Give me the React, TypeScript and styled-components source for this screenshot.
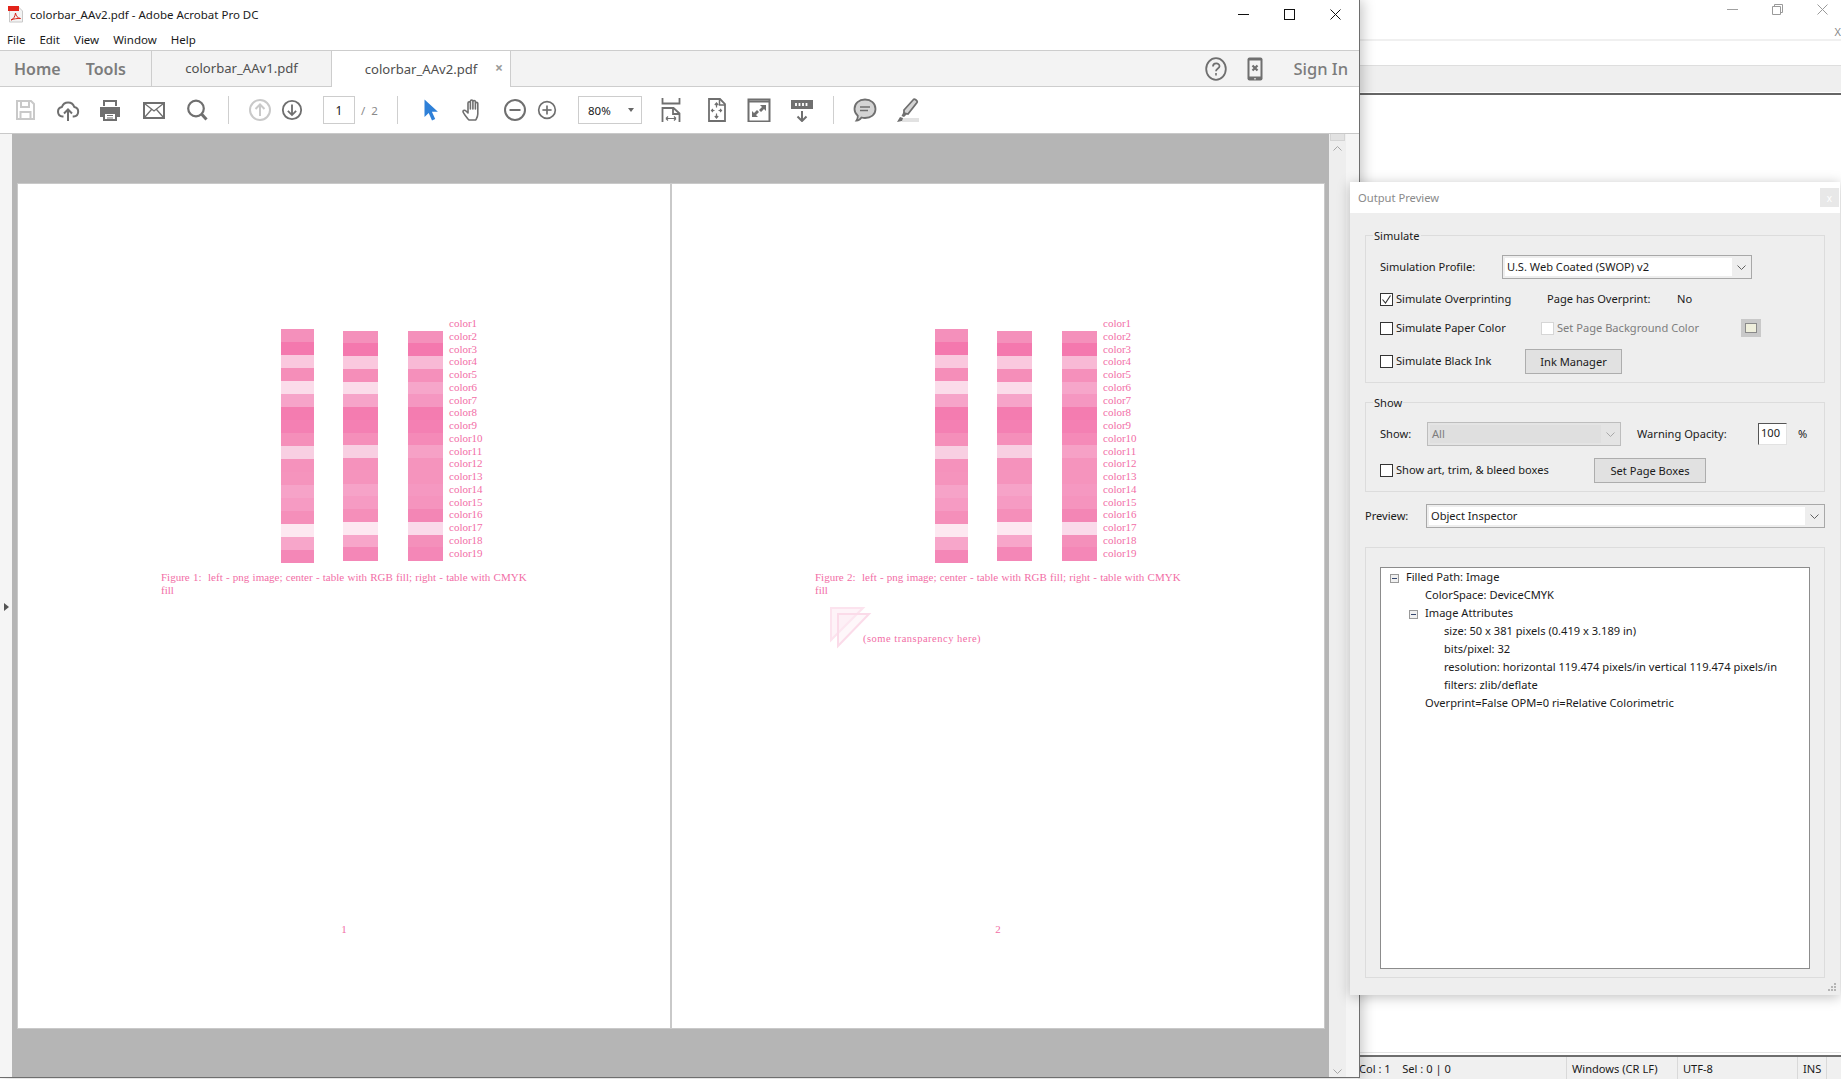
import React from 'react';
import styled, { createGlobalStyle } from 'styled-components';

const GlobalStyle = createGlobalStyle`
  html, body {
    margin: 0;
    padding: 0;
    width: 100%;
    height: 100%;
    overflow: hidden;
    background: #fff;
  }
  * {
    box-sizing: border-box;
  }
`;

const UI_FONT = `'Noto Sans', 'Open Sans', sans-serif`;
const PDF_FONT = `'Liberation Serif', 'Times New Roman', serif`;
const ICON = '#6f6f6f';

const Desktop = styled.div`
  position: relative;
  width: 1841px;
  height: 1079px;
  overflow: hidden;
  font-family: ${UI_FONT};
  font-size: 11.1px;
  color: #1a1a1a;
`;

/* ---- window behind ---- */
const BackWindow = styled.div`
  position: absolute;
  left: 1358px;
  top: 0;
  width: 483px;
  height: 1079px;
  background: #fff;
  display: flex;
  flex-direction: column;
`;

const BackTop = styled.div`
  height: 41px;
  position: relative;
  border-bottom: 2px solid #f0f0f0;
`;

const BackControls = styled.div`
  position: absolute;
  top: 4px;
  right: 13px;
  display: flex;
  gap: 34px;
`;

const BackClose = styled.span`
  position: absolute;
  right: 0;
  top: 24px;
  font-size: 11px;
  color: #8a8a8a;
`;

const BackBlank = styled.div`
  height: 25px;
  border-bottom: 1px solid #dedede;
`;

const BackBand = styled.div`
  height: 26px;
  background: #efefef;
`;

const BackRule = styled.div`
  height: 3px;
  background: #fff;
  border-bottom: 2px solid #666;
`;

const BackBody = styled.div`
  flex: 1;
  border-bottom: 1px solid #e4e4e4;
`;

const StatusBar = styled.div`
  height: 24px;
  margin-top: 2px;
  border-top: 2px solid #6e6e6e;
  background: #f0f0f0;
  display: flex;
  align-items: center;
`;

const StatusCell = styled.div<{ $w: number }>`
  width: ${({ $w }) => $w}px;
  height: 100%;
  padding-left: ${({ $w }) => ($w > 200 ? 1 : 5)}px;
  border-right: 1px solid #d9d9d9;
  display: flex;
  align-items: center;
  white-space: pre;
`;

/* ---- acrobat window ---- */
const AcrobatWindow = styled.div`
  position: absolute;
  left: 0;
  top: 0;
  width: 1360px;
  height: 1078px;
  background: #fff;
  border-right: 1px solid #6e6e6e;
  border-bottom: 1px solid #6e6e6e;
  box-shadow: 3px 0 12px rgba(0, 0, 0, 0.22);
  display: flex;
  flex-direction: column;
`;

const TitleBar = styled.div`
  height: 29px;
  display: flex;
  align-items: center;
  padding-left: 8px;
  font-size: 11.5px;
`;

const TitleText = styled.span`
  margin-left: 6px;
`;

const WindowControls = styled.div`
  margin-left: auto;
  display: flex;
  align-items: center;
  padding-right: 1px;
`;

const WindowButton = styled.div`
  width: 46px;
  height: 29px;
  display: flex;
  align-items: center;
  justify-content: center;
`;

const MenuBar = styled.div`
  height: 21px;
  display: flex;
  align-items: center;
  padding-left: 7px;
  gap: 14px;
  font-size: 11.5px;
`;

const TabBar = styled.div`
  height: 37px;
  display: flex;
  background: #f3f3f3;
  border-top: 1px solid #cdcdcd;
  border-bottom: 1px solid #cdcdcd;
`;

const NavArea = styled.div`
  width: 152px;
  display: flex;
  align-items: center;
  padding-left: 14px;
  gap: 25px;
  border-right: 1px solid #cdcdcd;
`;

const NavLink = styled.span`
  font-size: 16px;
  font-weight: 600;
  color: #7c7c7c;
`;

const Tab = styled.div<{ $active?: boolean; $w: number }>`
  position: relative;
  width: ${({ $w }) => $w}px;
  height: ${({ $active }) => ($active ? 36 : 35)}px;
  display: flex;
  align-items: center;
  justify-content: center;
  font-size: 13.1px;
  color: #4f4f4f;
  background: ${({ $active }) => ($active ? '#fff' : 'transparent')};
  border-right: 1px solid #cdcdcd;
  padding-bottom: 1px;
`;

const TabClose = styled.span`
  position: absolute;
  right: 7px;
  top: 7px;
  font-size: 14px;
  font-weight: 700;
  color: #9a9a9a;
`;

const TabRight = styled.div`
  margin-left: auto;
  display: flex;
  align-items: center;
  padding-right: 11px;
`;

const SignIn = styled.span`
  margin-left: 30px;
  font-size: 16.5px;
  font-weight: 500;
  color: #7c7c7c;
`;

const Toolbar = styled.div`
  height: 46px;
  display: flex;
  align-items: center;
  padding-left: 4px;
  background: #fff;
`;

const ToolSlot = styled.div<{ $w: number }>`
  width: ${({ $w }) => $w}px;
  flex: none;
  height: 100%;
  display: flex;
  align-items: center;
  justify-content: center;
`;

const ToolSep = styled.div`
  width: 1px;
  height: 28px;
  background: #cfcfcf;
`;

const PageBox = styled.div`
  margin-left: 20px;
  width: 32px;
  height: 28px;
  border: 1px solid #cdcdcd;
  display: flex;
  align-items: center;
  justify-content: center;
  font-size: 12px;
`;

const PageCount = styled.div`
  width: 31px;
  padding-left: 6px;
  font-size: 11.5px;
  color: #8a8a8a;
  white-space: pre;
`;

const ZoomBox = styled.div`
  margin-left: 21px;
  width: 64px;
  height: 28px;
  border: 1px solid #cdcdcd;
  display: flex;
  align-items: center;
  justify-content: space-between;
  padding: 0 7px 0 9px;
  font-size: 11.5px;
`;

const Caret = styled.span`
  width: 0;
  height: 0;
  border-left: 3.5px solid transparent;
  border-right: 3.5px solid transparent;
  border-top: 4px solid #666;
`;

const Workspace = styled.div`
  flex: 1;
  display: flex;
  min-height: 0;
  border-top: 1px solid #c9c9c9;
`;

const SidePanel = styled.div`
  width: 12px;
  background: #f5f5f5;
  display: flex;
  align-items: center;
  justify-content: center;
  padding-top: 2px;
`;

const SideArrow = styled.span`
  width: 0;
  height: 0;
  border-top: 4px solid transparent;
  border-bottom: 4px solid transparent;
  border-left: 5px solid #555;
`;

const DocArea = styled.div`
  width: 1317px;
  background: #b5b5b5;
  padding: 50px 0 0 6px;
  display: flex;
  align-items: flex-start;
  gap: 2px;
`;

const PdfPage = styled.div`
  position: relative;
  width: 652px;
  height: 844px;
  background: #fff;
  box-shadow: 0 0 0 1px #c9c9c9;
  padding: 133px 0 0 263px;
  display: flex;
  flex-direction: column;
  font-family: ${PDF_FONT};
  font-size: 11px;
  color: #f26ea6;
`;

const Figure = styled.div`
  display: flex;
  align-items: flex-start;
`;

const BarColumn = styled.div<{ $w: number; $mt: number; $ml: number }>`
  width: ${({ $w }) => $w}px;
  margin-top: ${({ $mt }) => $mt}px;
  margin-left: ${({ $ml }) => $ml}px;
  display: flex;
  flex-direction: column;
`;

const Band = styled.div<{ $color: string; $h: number }>`
  height: ${({ $h }) => $h}px;
  background: ${({ $color }) => $color};
`;

const ColorLabels = styled.div`
  margin-left: 6px;
  display: flex;
  flex-direction: column;
`;

const ColorLabel = styled.div`
  height: 12.78px;
  line-height: 12.78px;
  white-space: nowrap;
`;

const Caption = styled.div`
  margin: 8px 0 0 -120px;
  width: 400px;
  line-height: 13px;
  letter-spacing: 0;
  word-spacing: 0.5px;
  white-space: nowrap;
`;

const TransparencyRow = styled.div`
  margin: 10px 0 0 -105px;
  display: flex;
  align-items: flex-start;
`;

const TransparencyText = styled.span`
  margin: 26px 0 0 -11px;
  font-size: 10.5px;
  letter-spacing: 0.5px;
  white-space: nowrap;
`;

const PageNumber = styled.div`
  position: absolute;
  left: 0;
  right: 0;
  top: 739px;
  text-align: center;
`;

const ScrollBar = styled.div`
  width: 17px;
  background: #eeeeee;
  display: flex;
  flex-direction: column;
  align-items: center;
  justify-content: space-between;
  padding-bottom: 3px;
`;

const ScrollThumb = styled.div`
  width: 15px;
  height: 7px;
  background: #e2e2e2;
  border: 1px solid #d4d4d4;
  border-top: none;
`;

const ScrollUp = styled.div`
  margin-top: 5px;
  margin-bottom: auto;
  display: flex;
`;

const RightStrip = styled.div`
  flex: 1;
  background: #f5f5f5;
`;

/* ---- output preview panel ---- */
const PreviewPanel = styled.div`
  position: absolute;
  left: 1350px;
  top: 182px;
  width: 490px;
  height: 813px;
  background: #eeeeee;
  box-shadow: 0 2px 12px rgba(0, 0, 0, 0.25);
  display: flex;
  flex-direction: column;
`;

const PanelTitle = styled.div`
  height: 31px;
  background: #fff;
  display: flex;
  align-items: center;
  justify-content: space-between;
  padding: 0 1px 0 8px;
  font-size: 11.2px;
  color: #8a8a8a;
`;

const PanelClose = styled.div`
  width: 19px;
  height: 19px;
  background: #e8e8e8;
  color: #fff;
  font-size: 10px;
  display: flex;
  align-items: center;
  justify-content: center;
`;

const PanelBody = styled.div`
  flex: 1;
  padding: 22px 15px 0 15px;
  display: flex;
  flex-direction: column;
`;

const Group = styled.div<{ $h: number; $mt?: number }>`
  position: relative;
  height: ${({ $h }) => $h}px;
  margin-top: ${({ $mt }) => $mt ?? 0}px;
  border: 1px solid #dcdcdc;
  padding: 19px 14px 0 14px;
`;

const GroupLegend = styled.span`
  position: absolute;
  left: 7px;
  top: -8px;
  padding: 0 1px;
  background: #eeeeee;
  line-height: 16px;
`;

const Row = styled.div<{ $h: number; $mt?: number }>`
  display: flex;
  align-items: center;
  height: ${({ $h }) => $h}px;
  margin-top: ${({ $mt }) => $mt ?? 0}px;
  white-space: nowrap;
`;

const FixedCell = styled.div<{ $w: number; $ml?: number; $muted?: boolean }>`
  width: ${({ $w }) => $w}px;
  flex: none;
  margin-left: ${({ $ml }) => $ml ?? 0}px;
  padding-bottom: 2px;
  display: flex;
  align-items: center;
  color: ${({ $muted }) => ($muted ? '#7d7d7d' : 'inherit')};
`;

const CheckBox = styled.span<{ $disabled?: boolean }>`
  width: 13px;
  height: 13px;
  flex: none;
  margin: 2px 3px 0 0;
  background: #fff;
  border: 1px solid ${({ $disabled }) => ($disabled ? '#d6d6d6' : '#333')};
  display: flex;
  align-items: center;
  justify-content: center;
`;

const ComboBox = styled.div<{ $w: number; $disabled?: boolean }>`
  width: ${({ $w }) => $w}px;
  height: 24px;
  flex: none;
  display: flex;
  padding: 2px 0 2px 2px;
  background: ${({ $disabled }) => ($disabled ? '#e4e4e4' : '#eeeeee')};
  border: 1px solid ${({ $disabled }) => ($disabled ? '#bdbdbd' : '#a8a8a8')};
`;

const ComboValue = styled.div<{ $disabled?: boolean }>`
  flex: 1;
  padding-left: 2px;
  display: flex;
  align-items: center;
  background: ${({ $disabled }) => ($disabled ? '#dfdfdf' : '#fff')};
  color: ${({ $disabled }) => ($disabled ? '#7d7d7d' : 'inherit')};
  padding-bottom: 2px;
`;

const ComboArrow = styled.div`
  width: 19px;
  display: flex;
  align-items: center;
  justify-content: center;
`;

const PushButton = styled.div<{ $w: number }>`
  width: ${({ $w }) => $w}px;
  height: 25px;
  flex: none;
  background: #e1e1e1;
  border: 1px solid #adadad;
  display: flex;
  align-items: center;
  justify-content: center;
  padding-bottom: 1px;
`;

const Swatch = styled.div`
  width: 20px;
  height: 18px;
  background: #c9c9c9;
  padding: 4px;
  display: flex;
`;

const SwatchFill = styled.div`
  flex: 1;
  background: #efefdc;
  border: 1px solid #8a8a8a;
`;

const OpacityInput = styled.div`
  width: 29px;
  height: 22px;
  flex: none;
  background: #fff;
  border: 1px solid #e2e2e2;
  border-left: 1px solid #555;
  border-top: 1px solid #555;
  padding: 0 0 3px 2px;
  display: flex;
  align-items: center;
`;

const TreeBox = styled.div`
  height: 402px;
  background: #fff;
  border: 1px solid #8c8c8c;
`;

const TreeRow = styled.div<{ $indent: number }>`
  height: 18px;
  display: flex;
  align-items: center;
  padding-left: ${({ $indent }) => $indent}px;
  padding-bottom: 2px;
  white-space: nowrap;
`;

const Expander = styled.span`
  position: relative;
  width: 9px;
  height: 9px;
  margin-right: 7px;
  margin-top: 4px;
  background: #f0f0f0;
  border: 1px solid #9a9a9a;

  &::after {
    content: '';
    position: absolute;
    left: 1px;
    right: 1px;
    top: 3px;
    height: 1px;
    background: #34466e;
  }
`;

const ResizeGrip = styled.div`
  position: absolute;
  right: 3px;
  bottom: 3px;
  display: flex;
`;

/* ---- icons ---- */
const Svg = ({ children, w = 24, h = 24 }: { children: React.ReactNode; w?: number; h?: number }) => (
  <svg width={w} height={h} viewBox={`0 0 ${w} ${h}`} fill="none">
    {children}
  </svg>
);

const PdfIcon = () => (
  <svg width="16" height="17" viewBox="0 0 16 17" fill="none">
    <path d="M1.500 1h9l4 4v11h-13z" fill="#f3f3f3" stroke="#c8c8c8" />
    <rect x="0" y="0" width="11" height="5" fill="#e2231a" />
    <path d="M3 14c3-1 4-4 4.500-7 .5 3 2 5 5 5.500-3-.2-7 .3-9.500 1.500z" stroke="#d8261c" strokeWidth="1" />
  </svg>
);

const SaveIcon = () => (
  <Svg>
    <path d="M4 3h14l3 3v15H4z" stroke="#c9c9c9" strokeWidth="2" />
    <path d="M8 3v6h8V3M7.500 21v-7h10v7" stroke="#c9c9c9" strokeWidth="2" />
  </Svg>
);

const UploadIcon = () => (
  <Svg>
    <path
      d="M7.500 18.500H6.500a4.800 4.800 0 0 1-.6-9.500 6.500 6.500 0 0 1 12.400 0 4.800 4.800 0 0 1-.6 9.500h-1"
      stroke={ICON}
      strokeWidth="2"
    />
    <path d="M12 23V12M8 15.500l4-4 4 4" stroke={ICON} strokeWidth="2" />
  </Svg>
);

const PrintIcon = () => (
  <Svg>
    <path d="M6 8V3h12v5" stroke={ICON} strokeWidth="2" />
    <path d="M2 9h20v10h-3v-5H5v5H2z" fill={ICON} />
    <path d="M6 15h12v7H6z" stroke={ICON} strokeWidth="2" />
    <path d="M9 17.500h6M9 20h6" stroke={ICON} />
  </Svg>
);

const MailIcon = () => (
  <Svg>
    <rect x="2" y="5" width="20" height="15" stroke={ICON} strokeWidth="2" />
    <path d="M2.500 5.500L12 13l9.500-7.500M2.500 19.500l7-8M21.500 19.500l-7-8" stroke={ICON} strokeWidth="1.300" />
  </Svg>
);

const SearchIcon = () => (
  <Svg>
    <circle cx="11" cy="10.500" r="7.800" stroke={ICON} strokeWidth="2.200" />
    <path d="M16.500 16l5 5.500" stroke={ICON} strokeWidth="3" />
  </Svg>
);

const CircleArrow = ({ dir, color }: { dir: 'up' | 'down'; color: string }) => (
  <Svg>
    <circle cx="12" cy="12" r="10" stroke={color} strokeWidth="2" />
    {dir === 'up' ? (
      <path d="M12 18V6.500M7.500 11l4.500-4.500 4.500 4.500" stroke={color} strokeWidth="2" />
    ) : (
      <path d="M12 6v11.500M7.500 13l4.500 4.500 4.500-4.500" stroke={color} strokeWidth="2" />
    )}
  </Svg>
);

const CursorIcon = () => (
  <Svg>
    <path d="M6.500 1.500v17.500l4.200-4 3.300 7.500 3.200-1.400-3.300-7.300h6z" fill="#2e80d8" />
  </Svg>
);

const HandIcon = () => (
  <Svg>
    <path
      d="M7 21c-1.500-2-5-6-5-7.500s2-1.500 3-.5l2 2V5c0-1.600 2.400-1.600 2.400 0v6-7.800c0-1.600 2.500-1.600 2.500 0V11 3.700c0-1.600 2.500-1.600 2.500 0V11 5.500c0-1.500 2.400-1.500 2.400 0V16c0 2.500-1 4-2 6H8z"
      stroke={ICON}
      strokeWidth="1.600"
      strokeLinejoin="round"
    />
  </Svg>
);

const ZoomCircle = ({ plus }: { plus?: boolean }) => (
  <Svg>
    <circle cx="12" cy="12" r="10" stroke={ICON} strokeWidth="2" />
    <path d="M6.500 12h11" stroke={ICON} strokeWidth="2" />
    {plus && <path d="M12 6.500v11" stroke={ICON} strokeWidth="2" />}
  </Svg>
);

const FitWidthIcon = () => (
  <Svg>
    <path d="M2.500 0v5.500h17V0" stroke={ICON} strokeWidth="1.800" />
    <path d="M2.500 24V10h11l6 5.500V24M13 10v6h6" stroke={ICON} strokeWidth="1.800" />
    <path d="M6 20.500h10M6 20.500l2-2M6 20.500l2 2M16 20.500l-2-2M16 20.500l-2 2" stroke={ICON} strokeWidth="1.200" />
  </Svg>
);

const FitPageIcon = () => (
  <Svg>
    <path d="M4 1h11l5 5v17H4z" stroke={ICON} strokeWidth="1.800" />
    <path d="M14.500 1v6h5.500" stroke={ICON} strokeWidth="1.500" />
    <path
      d="M11.500 5v4.500M9.800 7l1.700-2 1.700 2M11.500 20v-4.500M9.800 18l1.700 2 1.700-2M6.500 12.500h3M8 11l-1.500 1.500L8 14M16.500 12.500h-3M15 11l1.500 1.500L15 14"
      stroke={ICON}
      strokeWidth="1.200"
    />
  </Svg>
);

const FullScreenIcon = () => (
  <Svg>
    <rect x="1.500" y="1.500" width="21" height="22" stroke={ICON} strokeWidth="2" />
    <path d="M1.500 3.500h21" stroke={ICON} strokeWidth="2" />
    <path d="M13 7h6v6l-2-2-3 3-2-2 3-3zM11 19H5v-6l2 2 3-3 2 2-3 3z" fill={ICON} />
  </Svg>
);

const ReadModeIcon = () => (
  <Svg>
    <rect x="1" y="2" width="22" height="9" fill={ICON} />
    <path d="M6 5v3M9.500 5v3M13 5v3M16.500 5v3" stroke="#fff" strokeWidth="1.800" />
    <path d="M12 13v10M7.500 18.500l4.500 4.500 4.500-4.500" stroke={ICON} strokeWidth="2" />
  </Svg>
);

const CommentIcon = () => (
  <Svg>
    <path
      d="M12 1.500c6 0 10.500 3.800 10.500 9.500s-4.500 9-10.500 9c-1.500 0-2.500-.2-3.500-.5-1 1.500-3 3-5 3 1-1.300 1.500-3 1.300-4.800C2.700 16 1.500 13.500 1.500 11 1.500 5.300 6 1.500 12 1.500z"
      fill="#d4d4d4"
      stroke={ICON}
      strokeWidth="1.800"
    />
    <path d="M7 9h10M7 12.500h8" stroke={ICON} strokeWidth="1.400" />
  </Svg>
);

const HighlightIcon = () => (
  <Svg>
    <rect x="6" y="20" width="17" height="4" fill="#e2e2e2" />
    <path d="M8 12L17.500 1.500c1-1 4.500 1.500 3.500 3L12 16l-4-1z" fill="#d4d4d4" stroke={ICON} strokeWidth="1.800" />
    <path d="M7.500 14l-2 4 2.500 1 3-3zM1 24l3-5 3 1-1 3z" fill={ICON} />
  </Svg>
);

const HelpIcon = () => (
  <Svg w={22} h={24}>
    <ellipse cx="11" cy="12" rx="9.800" ry="10.800" stroke={ICON} strokeWidth="1.800" />
    <path d="M8 9.500c0-4 6.500-4 6.500-.3 0 2.300-3.500 2.300-3.500 5" stroke={ICON} strokeWidth="1.800" />
    <path d="M11 16v2.500" stroke={ICON} strokeWidth="1.600" />
  </Svg>
);

const MobileIcon = () => (
  <Svg w={16} h={24}>
    <rect x="0.500" y="0.500" width="15" height="23" rx="2" fill={ICON} />
    <rect x="2.500" y="3.500" width="11" height="16" fill="#f3f3f3" />
    <path d="M5.500 8.500l5 5M10.500 8.500l-5 5" stroke={ICON} strokeWidth="2.200" />
    <rect x="7.300" y="21" width="1.400" height="1.500" fill="#e8e8e8" />
  </Svg>
);

const MinimizeGlyph = ({ color }: { color: string }) => (
  <svg width="11" height="11" viewBox="0 0 11 11" fill="none">
    <path d="M0 5.500h11" stroke={color} />
  </svg>
);

const MaximizeGlyph = () => (
  <svg width="11" height="11" viewBox="0 0 11 11" fill="none">
    <rect x="0.500" y="0.500" width="10" height="10" stroke="#111" />
  </svg>
);

const CloseGlyph = ({ color }: { color: string }) => (
  <svg width="11" height="11" viewBox="0 0 11 11" fill="none">
    <path d="M0.500 0.500l10 10M10.500 0.500l-10 10" stroke={color} />
  </svg>
);

const RestoreGlyph = () => (
  <svg width="11" height="11" viewBox="0 0 11 11" fill="none">
    <path d="M0.500 2.500h8v8h-8zM2.500 2.500v-2h8v8h-2" stroke="#9a9a9a" />
  </svg>
);

const Chevron = ({ color = '#606060' }: { color?: string }) => (
  <svg width="9" height="5" viewBox="0 0 9 5" fill="none">
    <path d="M0.500 0.500l4 4 4-4" stroke={color} />
  </svg>
);

const CheckGlyph = () => (
  <svg width="11" height="11" viewBox="0 0 11 11" fill="none">
    <path d="M1.500 5.500l3 3.500 5-7.500" stroke="#333" strokeWidth="1.100" />
  </svg>
);

const TriangleMark = () => (
  <svg width="44" height="42" viewBox="0 0 44 42" fill="none">
    <path d="M1 1h32L1 33z" fill="#fef3f8" stroke="#fce3ee" strokeWidth="2" />
    <path d="M8 7h31L8 39z" fill="#fdeaf2" fillOpacity="0.4" stroke="#fbdbe9" strokeWidth="2" />
  </svg>
);

const GripIcon = () => (
  <svg width="9" height="9" viewBox="0 0 9 9" fill="#b5b5b5">
    <rect x="6" y="0" width="2" height="2" />
    <rect x="3" y="3" width="2" height="2" />
    <rect x="6" y="3" width="2" height="2" />
    <rect x="0" y="6" width="2" height="2" />
    <rect x="3" y="6" width="2" height="2" />
    <rect x="6" y="6" width="2" height="2" />
  </svg>
);

/* ---- data ---- */
const LEFT_BANDS = [
  '#f490bb', '#f478ae', '#fac8de', '#f58eb9', '#fbdcea', '#f6a4c9', '#f47cb0', '#f480b3', '#f58fba',
  '#f8cfe2', '#f592bc', '#f594bd', '#f6a3c8', '#f69bc3', '#f58fba', '#fde8f1', '#f7a6ca', '#f487b7',
];
const CENTER_BANDS = LEFT_BANDS;
const RIGHT_BANDS = [
  '#f490bb', '#f478ae', '#f8b9d5', '#f590bb', '#f6a6ca', '#f597c1', '#f47cb0', '#f480b3', '#f58ab8',
  '#f6a1c6', '#f594bd', '#f594bd', '#f598c1', '#f594be', '#f386b5', '#fadaea', '#f490bb', '#f487b7',
];
const TABLE_HEIGHTS = [12, 13, 13, 13, 12, 13, 13, 13, 12, 13, 12, 14, 12, 13, 13, 13, 12, 14];
const COLOR_NAMES = Array.from({ length: 19 }, (_, i) => `color${i + 1}`);

function ColorFigure() {
  return (
    <Figure>
      <BarColumn $w={33} $mt={12} $ml={0}>
        {LEFT_BANDS.map((color, i) => (
          <Band key={i} $color={color} $h={13} />
        ))}
      </BarColumn>
      <BarColumn $w={35} $mt={14} $ml={29}>
        {CENTER_BANDS.map((color, i) => (
          <Band key={i} $color={color} $h={TABLE_HEIGHTS[i]} />
        ))}
      </BarColumn>
      <BarColumn $w={35} $mt={14} $ml={30}>
        {RIGHT_BANDS.map((color, i) => (
          <Band key={i} $color={color} $h={TABLE_HEIGHTS[i]} />
        ))}
      </BarColumn>
      <ColorLabels>
        {COLOR_NAMES.map((name) => (
          <ColorLabel key={name}>{name}</ColorLabel>
        ))}
      </ColorLabels>
    </Figure>
  );
}

export default function App() {
  return (
    <Desktop>
      <GlobalStyle />

      <BackWindow>
        <BackTop>
          <BackControls>
            <MinimizeGlyph color="#a0a0a0" />
            <RestoreGlyph />
            <CloseGlyph color="#9a9a9a" />
          </BackControls>
          <BackClose>X</BackClose>
        </BackTop>
        <BackBlank />
        <BackBand />
        <BackRule />
        <BackBody />
        <StatusBar>
          <StatusCell $w={209}>{'Col : 1    Sel : 0 | 0'}</StatusCell>
          <StatusCell $w={111}>Windows (CR LF)</StatusCell>
          <StatusCell $w={120}>UTF-8</StatusCell>
          <StatusCell $w={29}>INS</StatusCell>
        </StatusBar>
      </BackWindow>

      <AcrobatWindow>
        <TitleBar>
          <PdfIcon />
          <TitleText>colorbar_AAv2.pdf - Adobe Acrobat Pro DC</TitleText>
          <WindowControls>
            <WindowButton>
              <MinimizeGlyph color="#111" />
            </WindowButton>
            <WindowButton>
              <MaximizeGlyph />
            </WindowButton>
            <WindowButton>
              <CloseGlyph color="#111" />
            </WindowButton>
          </WindowControls>
        </TitleBar>
        <MenuBar>
          <span>File</span>
          <span>Edit</span>
          <span>View</span>
          <span>Window</span>
          <span>Help</span>
        </MenuBar>
        <TabBar>
          <NavArea>
            <NavLink>Home</NavLink>
            <NavLink>Tools</NavLink>
          </NavArea>
          <Tab $w={180}>colorbar_AAv1.pdf</Tab>
          <Tab $w={179} $active>
            colorbar_AAv2.pdf
            <TabClose>×</TabClose>
          </Tab>
          <TabRight>
            <HelpIcon />
            <ToolSlot $w={20} />
            <MobileIcon />
            <SignIn>Sign In</SignIn>
          </TabRight>
        </TabBar>
        <Toolbar>
          <ToolSlot $w={42}><SaveIcon /></ToolSlot>
          <ToolSlot $w={43}><UploadIcon /></ToolSlot>
          <ToolSlot $w={42}><PrintIcon /></ToolSlot>
          <ToolSlot $w={45}><MailIcon /></ToolSlot>
          <ToolSlot $w={41}><SearchIcon /></ToolSlot>
          <ToolSlot $w={22}><ToolSep /></ToolSlot>
          <ToolSlot $w={42}><CircleArrow dir="up" color="#c9c9c9" /></ToolSlot>
          <ToolSlot $w={22}><CircleArrow dir="down" color={ICON} /></ToolSlot>
          <PageBox>1</PageBox>
          <PageCount>{'/  2'}</PageCount>
          <ToolSlot $w={22}><ToolSep /></ToolSlot>
          <ToolSlot $w={44}><CursorIcon /></ToolSlot>
          <ToolSlot $w={41}><HandIcon /></ToolSlot>
          <ToolSlot $w={44}><ZoomCircle /></ToolSlot>
          <ToolSlot $w={20}><ZoomCircle plus /></ToolSlot>
          <ZoomBox>
            80%
            <Caret />
          </ZoomBox>
          <ToolSlot $w={60}><FitWidthIcon /></ToolSlot>
          <ToolSlot $w={29}><FitPageIcon /></ToolSlot>
          <ToolSlot $w={56}><FullScreenIcon /></ToolSlot>
          <ToolSlot $w={30}><ReadModeIcon /></ToolSlot>
          <ToolSlot $w={33}><ToolSep /></ToolSlot>
          <ToolSlot $w={30}><CommentIcon /></ToolSlot>
          <ToolSlot $w={56}><HighlightIcon /></ToolSlot>
        </Toolbar>
        <Workspace>
          <SidePanel>
            <SideArrow />
          </SidePanel>
          <DocArea>
            <PdfPage>
              <ColorFigure />
              <Caption>
                Figure 1:&nbsp; left - png image; center - table with RGB fill; right - table with CMYK
                <br />
                fill
              </Caption>
              <PageNumber>1</PageNumber>
            </PdfPage>
            <PdfPage>
              <ColorFigure />
              <Caption>
                Figure 2:&nbsp; left - png image; center - table with RGB fill; right - table with CMYK
                <br />
                fill
              </Caption>
              <TransparencyRow>
                <TriangleMark />
                <TransparencyText>(some transparency here)</TransparencyText>
              </TransparencyRow>
              <PageNumber>2</PageNumber>
            </PdfPage>
          </DocArea>
          <ScrollBar>
            <ScrollThumb />
            <ScrollUp>
              <svg width="9" height="5" viewBox="0 0 9 5" fill="none">
                <path d="M0.500 4.500l4-4 4 4" stroke="#a6a6a6" />
              </svg>
            </ScrollUp>
            <Chevron color="#a6a6a6" />
          </ScrollBar>
          <RightStrip />
        </Workspace>
      </AcrobatWindow>

      <PreviewPanel>
        <PanelTitle>
          Output Preview
          <PanelClose>x</PanelClose>
        </PanelTitle>
        <PanelBody>
          <Group $h={148}>
            <GroupLegend>Simulate</GroupLegend>
            <Row $h={24}>
              <FixedCell $w={122}>Simulation Profile:</FixedCell>
              <ComboBox $w={250}>
                <ComboValue>U.S. Web Coated (SWOP) v2</ComboValue>
                <ComboArrow><Chevron /></ComboArrow>
              </ComboBox>
            </Row>
            <Row $h={13} $mt={14}>
              <FixedCell $w={167}>
                <CheckBox><CheckGlyph /></CheckBox>
                Simulate Overprinting
              </FixedCell>
              <FixedCell $w={130}>Page has Overprint:</FixedCell>
              <FixedCell $w={30}>No</FixedCell>
            </Row>
            <Row $h={18} $mt={13}>
              <FixedCell $w={161}>
                <CheckBox />
                Simulate Paper Color
              </FixedCell>
              <FixedCell $w={200} $muted>
                <CheckBox $disabled />
                Set Page Background Color
              </FixedCell>
              <Swatch><SwatchFill /></Swatch>
            </Row>
            <Row $h={25} $mt={12}>
              <FixedCell $w={145}>
                <CheckBox />
                Simulate Black Ink
              </FixedCell>
              <PushButton $w={97}>Ink Manager</PushButton>
            </Row>
          </Group>

          <Group $h={90} $mt={19}>
            <GroupLegend>Show</GroupLegend>
            <Row $h={24}>
              <FixedCell $w={47}>Show:</FixedCell>
              <ComboBox $w={194} $disabled>
                <ComboValue $disabled>All</ComboValue>
                <ComboArrow><Chevron color="#a8a8a8" /></ComboArrow>
              </ComboBox>
              <FixedCell $w={121} $ml={16}>Warning Opacity:</FixedCell>
              <OpacityInput>100</OpacityInput>
              <FixedCell $w={20} $ml={11}>%</FixedCell>
            </Row>
            <Row $h={25} $mt={12}>
              <FixedCell $w={214}>
                <CheckBox />
                Show art, trim, &amp; bleed boxes
              </FixedCell>
              <PushButton $w={112}>Set Page Boxes</PushButton>
            </Row>
          </Group>

          <Row $h={24} $mt={12}>
            <FixedCell $w={61}>Preview:</FixedCell>
            <ComboBox $w={399}>
              <ComboValue>Object Inspector</ComboValue>
              <ComboArrow><Chevron /></ComboArrow>
            </ComboBox>
          </Row>

          <Group $h={431} $mt={19}>
            <TreeBox>
              <TreeRow $indent={9}>
                <Expander />
                Filled Path: Image
              </TreeRow>
              <TreeRow $indent={44}>ColorSpace: DeviceCMYK</TreeRow>
              <TreeRow $indent={28}>
                <Expander />
                Image Attributes
              </TreeRow>
              <TreeRow $indent={63}>size: 50 x 381 pixels (0.419 x 3.189 in)</TreeRow>
              <TreeRow $indent={63}>bits/pixel: 32</TreeRow>
              <TreeRow $indent={63}>resolution: horizontal 119.474 pixels/in vertical 119.474 pixels/in</TreeRow>
              <TreeRow $indent={63}>filters: zlib/deflate</TreeRow>
              <TreeRow $indent={44}>Overprint=False OPM=0 ri=Relative Colorimetric</TreeRow>
            </TreeBox>
          </Group>
        </PanelBody>
        <ResizeGrip>
          <GripIcon />
        </ResizeGrip>
      </PreviewPanel>
    </Desktop>
  );
}
